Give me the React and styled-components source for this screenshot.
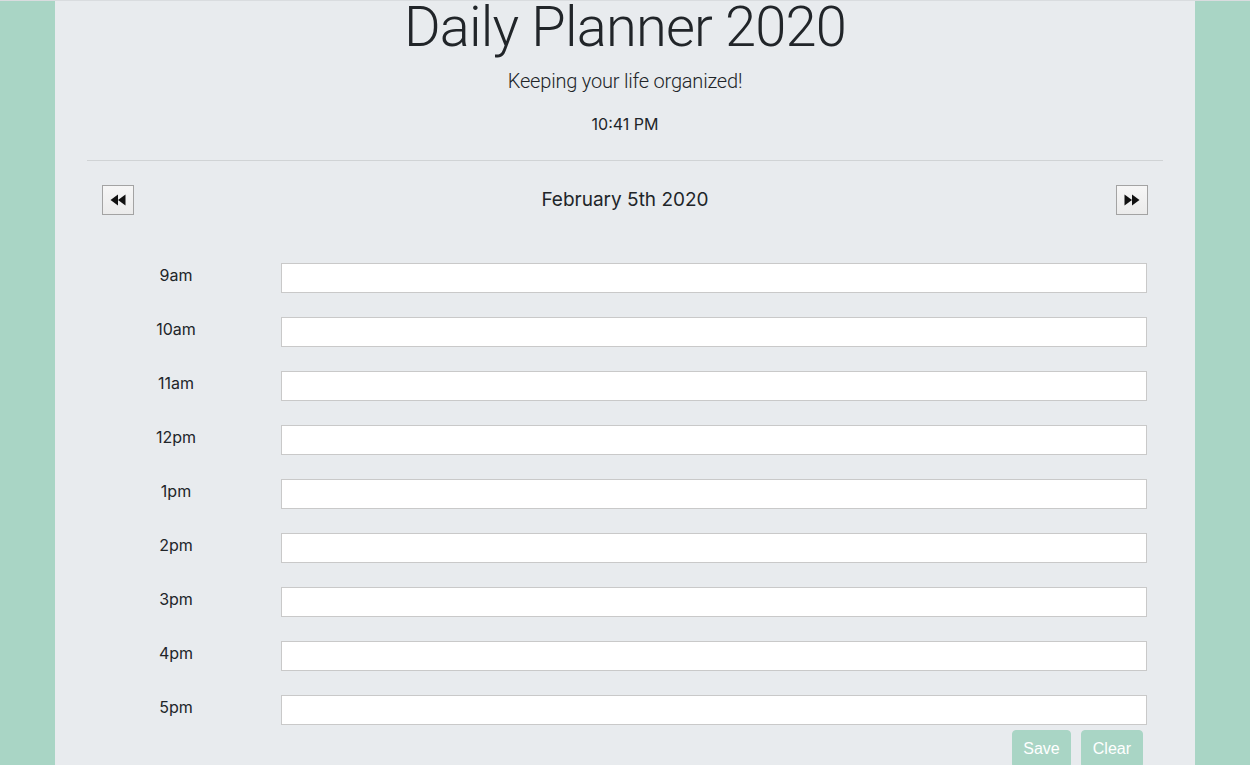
import React from "react";
import styled, { createGlobalStyle } from "styled-components";

const GlobalStyle = createGlobalStyle`
  html, body {
    margin: 0;
    padding: 0;
  }
  body {
    background: #a9d5c5;
    border-top: 1px solid #d9dcdf;
    font-family: Inter, "Noto Sans", sans-serif;
    color: #212529;
  }
`;

const Page = styled.div`
  width: 1140px;
  margin: 0 auto;
  min-height: calc(100vh - 1px);
  background: #e8ebee;
  padding: 0 32px;
  box-sizing: border-box;
`;

const Header = styled.header`
  display: flex;
  flex-direction: column;
  align-items: center;
  text-align: center;
`;

const Title = styled.h1`
  margin: 0;
  font-family: Roboto, "Noto Sans", sans-serif;
  font-size: 56px;
  line-height: 52px;
  font-weight: 300;
  letter-spacing: -0.8px;
`;

const Lead = styled.p`
  margin: 13px 0 0;
  font-family: Roboto, "Noto Sans", sans-serif;
  font-size: 20px;
  line-height: 30px;
  font-weight: 300;
  letter-spacing: -0.2px;
`;

const Clock = styled.p`
  margin: 16px 0 0;
  font-size: 16px;
  line-height: 24px;
  font-weight: 400;
`;

const Divider = styled.hr`
  margin: 24px 0 0;
  border: 0;
  border-top: 1px solid rgba(0, 0, 0, 0.1);
`;

const Main = styled.main`
  padding: 0 15px;
`;

const DateBar = styled.div`
  margin-top: 24px;
  display: flex;
  align-items: center;
  justify-content: space-between;
  height: 30px;
`;

const DateText = styled.h2`
  margin: 0;
  font-size: 19px;
  font-weight: 400;
  line-height: 30px;
`;

const NavButton = styled.button`
  width: 32px;
  height: 30px;
  padding: 0;
  display: flex;
  align-items: center;
  justify-content: center;
  border: 1px solid #a3a3a3;
  border-radius: 0;
  background: linear-gradient(#f6f6f6, #ebebeb);
  cursor: pointer;
`;

const Hours = styled.section`
  margin-top: 48px;
  display: flex;
  flex-direction: column;
  gap: 24px;
`;

const HourRow = styled.div`
  display: grid;
  grid-template-columns: 148px 1fr;
  column-gap: 31px;
  align-items: start;
  padding-right: 1px;
`;

const HourLabel = styled.label`
  text-align: center;
  font-size: 16px;
  line-height: 25px;
`;

const HourInput = styled.input`
  height: 30px;
  box-sizing: border-box;
  border: 1px solid #c9c9c9;
  background: #fff;
  padding: 2px 6px;
  font-size: 16px;
  font-family: inherit;
  outline: none;
`;

const Actions = styled.div`
  margin-top: 5px;
  display: flex;
  justify-content: flex-end;
  gap: 10px;
  padding-right: 5px;
`;

const ActionButton = styled.button`
  height: 38px;
  padding: 0 ${(p) => p.$pad || 10}px;
  border: 1px solid #a9d5c5;
  border-radius: 4px;
  background: #a9d5c5;
  color: #fff;
  font-family: "Liberation Sans", Arial, sans-serif;
  font-size: 16px;
  line-height: 24px;
  cursor: pointer;
`;

const Rewind = () => (
  <svg width="16" height="12" viewBox="0 0 16 12">
    <polygon points="8,0.5 0.5,6 8,11.5" fill="#111" />
    <polygon points="15.5,0.5 8,6 15.5,11.5" fill="#111" />
  </svg>
);

const Forward = () => (
  <svg width="16" height="12" viewBox="0 0 16 12">
    <polygon points="0.5,0.5 8,6 0.5,11.5" fill="#111" />
    <polygon points="8,0.5 15.5,6 8,11.5" fill="#111" />
  </svg>
);

const hours = ["9am", "10am", "11am", "12pm", "1pm", "2pm", "3pm", "4pm", "5pm"];

export default function App() {
  return (
    <>
      <GlobalStyle />
      <Page>
        <Header>
          <Title>Daily Planner 2020</Title>
          <Lead>Keeping your life organized!</Lead>
          <Clock>10:41 PM</Clock>
        </Header>
        <Divider />
        <Main>
          <DateBar>
            <NavButton aria-label="Previous day">
              <Rewind />
            </NavButton>
            <DateText>February 5th 2020</DateText>
            <NavButton aria-label="Next day">
              <Forward />
            </NavButton>
          </DateBar>
          <Hours>
            {hours.map((h) => (
              <HourRow key={h}>
                <HourLabel>{h}</HourLabel>
                <HourInput type="text" />
              </HourRow>
            ))}
          </Hours>
          <Actions>
            <ActionButton>Save</ActionButton>
            <ActionButton $pad={11}>Clear</ActionButton>
          </Actions>
        </Main>
      </Page>
    </>
  );
}
